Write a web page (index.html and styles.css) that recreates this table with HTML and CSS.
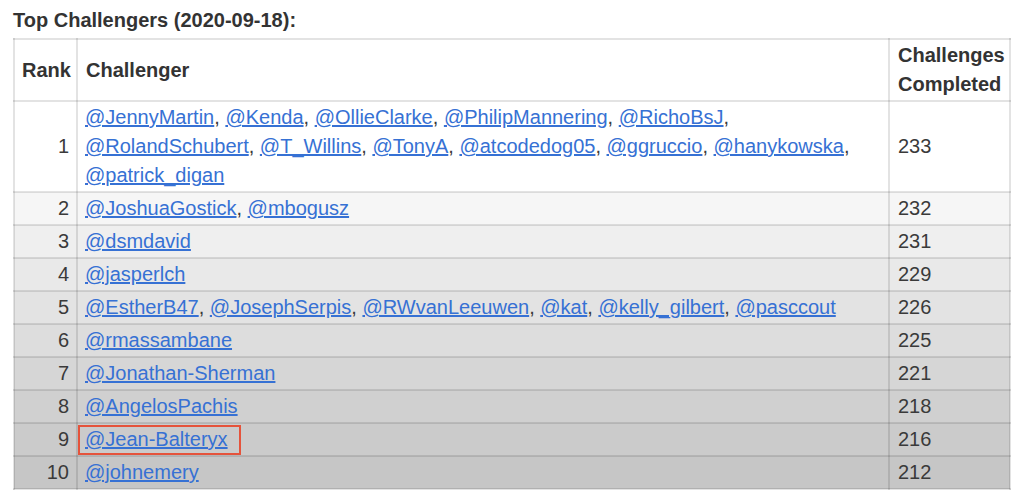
FILE: index.html
```html
<!DOCTYPE html>
<html>
<head>
<meta charset="utf-8">
<link rel="stylesheet" href="styles.css">
</head>
<body>
<p class="title">Top Challengers (2020-09-18):</p>
<table class="board">
  <thead>
    <tr>
      <th class="rank-h">Rank</th>
      <th class="who-h">Challenger</th>
      <th class="done-h">Challenges<br>Completed</th>
    </tr>
  </thead>
  <tbody>
    <tr class="r1">
      <td class="rank">1</td>
      <td class="who"><a href="#">@JennyMartin</a>, <a href="#">@Kenda</a>, <a href="#">@OllieClarke</a>, <a href="#">@PhilipMannering</a>, <a href="#">@RichoBsJ</a>, <a href="#">@RolandSchubert</a>, <a href="#">@T_Willins</a>, <a href="#">@TonyA</a>, <a href="#">@atcodedog05</a>, <a href="#">@ggruccio</a>, <a href="#">@hanykowska</a>, <a href="#">@patrick_digan</a></td>
      <td class="done">233</td>
    </tr>
    <tr class="r2">
      <td class="rank">2</td>
      <td class="who"><a href="#">@JoshuaGostick</a>, <a href="#">@mbogusz</a></td>
      <td class="done">232</td>
    </tr>
    <tr class="r3">
      <td class="rank">3</td>
      <td class="who"><a href="#">@dsmdavid</a></td>
      <td class="done">231</td>
    </tr>
    <tr class="r4">
      <td class="rank">4</td>
      <td class="who"><a href="#">@jasperlch</a></td>
      <td class="done">229</td>
    </tr>
    <tr class="r5">
      <td class="rank">5</td>
      <td class="who"><a href="#">@EstherB47</a>, <a href="#">@JosephSerpis</a>, <a href="#">@RWvanLeeuwen</a>, <a href="#">@kat</a>, <a href="#">@kelly_gilbert</a>, <a href="#">@pasccout</a></td>
      <td class="done">226</td>
    </tr>
    <tr class="r6">
      <td class="rank">6</td>
      <td class="who"><a href="#">@rmassambane</a></td>
      <td class="done">225</td>
    </tr>
    <tr class="r7">
      <td class="rank">7</td>
      <td class="who"><a href="#">@Jonathan-Sherman</a></td>
      <td class="done">221</td>
    </tr>
    <tr class="r8">
      <td class="rank">8</td>
      <td class="who"><a href="#">@AngelosPachis</a></td>
      <td class="done">218</td>
    </tr>
    <tr class="r9">
      <td class="rank">9</td>
      <td class="who"><span class="mark"><a href="#">@Jean-Balteryx</a></span></td>
      <td class="done">216</td>
    </tr>
    <tr class="r10">
      <td class="rank">10</td>
      <td class="who"><a href="#">@johnemery</a></td>
      <td class="done">212</td>
    </tr>
  </tbody>
</table>
</body>
</html>
```
FILE: styles.css
```css
html, body {
  margin: 0;
  padding: 0;
  background: #ffffff;
}
body {
  padding: 8px 13px 0 13px;
  font-family: "Liberation Sans", Arial, Helvetica, sans-serif;
  font-size: 20px;
  color: #3a3a3a;
}
.title {
  margin: 0 0 6px 0;
  font-weight: bold;
  line-height: 24px;
  color: #333333;
}
.board {
  width: 998px;
  table-layout: fixed;
  border-collapse: collapse;
  border: 2px solid #d6d6d6;
}
.board th,
.board td {
  border: 2px solid rgba(0, 0, 0, 0.11);
  padding: 1px 8px;
  line-height: 29px;
  vertical-align: middle;
}
.board th {
  font-weight: bold;
  text-align: left;
  color: #333333;
}
.board th.rank-h { width: 47px; padding-left: 7px; padding-right: 7px; }
.board th.done-h { width: 103px; }
.rank { text-align: right; }
.done { text-align: left; }
.board td.rank { padding-right: 7px; padding-left: 4px; }
.board td.who { padding-left: 7px; }
.who a {
  color: #3671d4;
  text-decoration: underline;
}
.mark {
  position: relative;
}
.mark::after {
  content: "";
  position: absolute;
  left: -7px;
  right: -13px;
  top: -3px;
  bottom: -5px;
  border: 2px solid #e5533b;
  pointer-events: none;
}
.r1 { background: #ffffff; }
.r2 { background: #f6f6f6; }
.r3 { background: #efefef; }
.r4 { background: #e9e9e9; }
.r5 { background: #e3e3e3; }
.r6 { background: #dddddd; }
.r7 { background: #d6d6d6; }
.r8 { background: #d0d0d0; }
.r9 { background: #cbcbcb; }
.r10 { background: #c6c6c6; }
```
